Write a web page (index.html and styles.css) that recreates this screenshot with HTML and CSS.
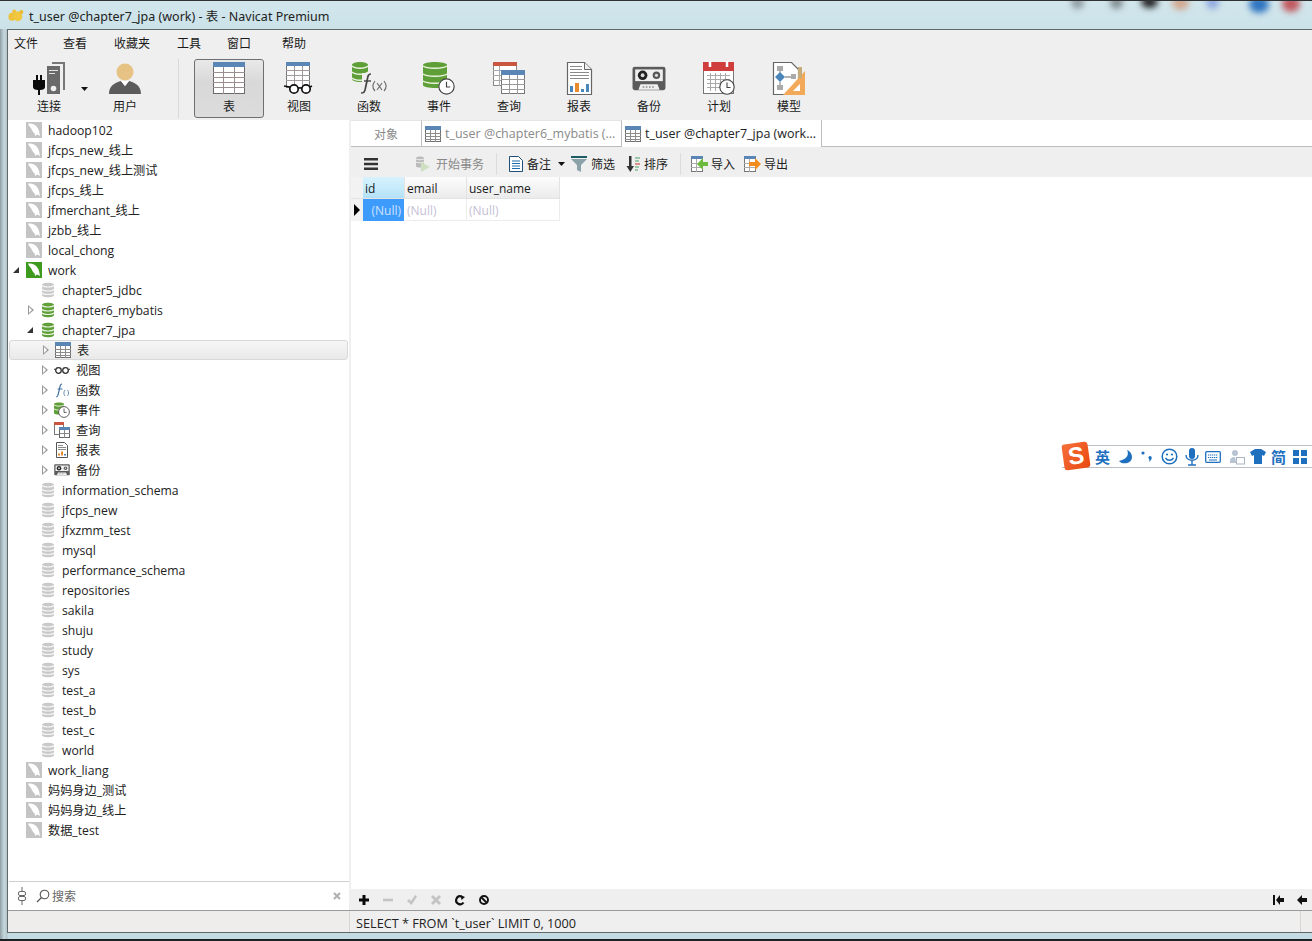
FILE: index.html
```html
<!DOCTYPE html>
<html lang="zh">
<head>
<meta charset="utf-8">
<title>t_user @chapter7_jpa (work) - 表 - Navicat Premium</title>
<link rel="stylesheet" href="styles.css">
</head>
<body>
<svg class="defs" width="0" height="0">
  <symbol id="conn" viewBox="0 0 16 16"><rect width="16" height="16" fill="#c4c4c4"/><path d="M2 1.500c4-.5 8 1 10 5 1 2 1.500 4 2 7.500-1-.5-2.500-1.500-3-1.500L9 14c0-2-.5-3-1.500-3.500C6 9 6 7 4.500 5.500 3.500 4.500 2.500 3 2 1.500z" fill="#fff"/></symbol>
  <symbol id="conn-on" viewBox="0 0 16 16"><rect width="16" height="16" fill="#3e9a1f"/><path d="M2 1.500c4-.5 8 1 10 5 1 2 1.500 4 2 7.500-1-.5-2.500-1.500-3-1.500L9 14c0-2-.5-3-1.500-3.500C6 9 6 7 4.500 5.500 3.500 4.500 2.500 3 2 1.500z" fill="#fff"/></symbol>
  <symbol id="db-off" viewBox="0 0 14 16"><path d="M1 3c0-3 12-3 12 0v10c0 3-12 3-12 0z" fill="#c9c9c9"/><path d="M1 3.500c2 2 10 2 12 0M1 7.500c2 2 10 2 12 0M1 11c2 2 10 2 12 0" fill="none" stroke="#f5f5f5" stroke-width="1.200"/></symbol>
  <symbol id="db-on" viewBox="0 0 14 16"><path d="M1 3c0-3 12-3 12 0v10c0 3-12 3-12 0z" fill="#5f9f37"/><path d="M1 3.500c2 2 10 2 12 0M1 7.500c2 2 10 2 12 0M1 11c2 2 10 2 12 0" fill="none" stroke="#e8f1df" stroke-width="1.200"/></symbol>
  <symbol id="tbl" viewBox="0 0 16 16"><rect x=".5" y=".5" width="15" height="15" fill="#fff" stroke="#6f6f6f"/><rect width="16" height="4" fill="#5a86b5"/><path d="M0 7.500h16M0 10.500h16M0 13.500h16M5.500 4v12M10.500 4v12" stroke="#8c8c8c"/></symbol>
  <symbol id="glasses" viewBox="0 0 16 16"><circle cx="4.500" cy="8.500" r="2.800" fill="#fff" stroke="#333" stroke-width="1.300"/><circle cx="11.500" cy="8.500" r="2.800" fill="#fff" stroke="#333" stroke-width="1.300"/><path d="M0 7l2 1M16 7l-2 1" stroke="#333"/></symbol>
  <symbol id="clock" viewBox="0 0 16 16"><circle cx="8" cy="8" r="7.200" fill="#fff" stroke="#444" stroke-width="1.100"/><path d="M8 3.500V8.500h3.500" fill="none" stroke="#444" stroke-width="1.100"/></symbol>
  <symbol id="query" viewBox="0 0 16 16"><rect x=".5" y=".5" width="9" height="12" fill="#fff" stroke="#777"/><rect width="10" height="3" fill="#c9563f"/><rect x="5.500" y="5.500" width="10" height="10" fill="#fff" stroke="#666"/><rect x="5" y="5" width="11" height="3" fill="#5a86b5"/><path d="M6 11.500h10M10.500 8v8" stroke="#888"/></symbol>
  <symbol id="report" viewBox="0 0 16 16"><path d="M2.500.5h8l3 3v12h-11z" fill="#fff" stroke="#555"/><path d="M4 3.500h5M4 5.500h8M4 7.500h8" stroke="#888"/><path d="M4 13.500v-2h2v2zM7 13.500v-4h2v4z" fill="#e88a2e"/><path d="M10 13.500v-1.500h2v1.500z" fill="#3f7fb8"/></symbol>
  <symbol id="tape" viewBox="0 0 32 24"><rect x=".5" y=".5" width="31" height="22" rx="2" fill="#5b5b5b"/><rect x="3" y="3" width="26" height="11" fill="#efefef"/><circle cx="10" cy="8.500" r="4.500" fill="#222"/><circle cx="10" cy="8.500" r="1.800" fill="#ddd"/><circle cx="23" cy="8.500" r="3.500" fill="#555"/><circle cx="23" cy="8.500" r="1.500" fill="#ddd"/><path d="M6 22l2-5h16l2 5z" fill="#efefef"/><path d="M10 19.500h12" stroke="#555" stroke-dasharray="1.500 1.500"/></symbol>
  <symbol id="note" viewBox="0 0 16 16"><path d="M1.500.5h9l4 4v11h-13z" fill="#fff" stroke="#1f4e79"/><path d="M4 5h8M4 7.500h8M4 10h8M4 12.500h8" stroke="#1b6fa8" stroke-width="1.100"/></symbol>
  <symbol id="down" viewBox="0 0 7 4"><path d="M0 0h7L3.500 4z" fill="#111"/></symbol>
</svg>

<div class="window">
  <header class="titlebar">
    <svg class="app-logo" viewBox="0 0 18 14"><ellipse cx="4.500" cy="8.500" rx="4" ry="4.500" fill="#eec13c"/><ellipse cx="11" cy="8" rx="5" ry="5.500" fill="#f1c73e"/><circle cx="7" cy="2.500" r="2.300" fill="#f0c23c"/><circle cx="15" cy="3" r="2.300" fill="#e9b935"/></svg>
    <span class="title-text">t_user @chapter7_jpa (work) - 表 - Navicat Premium</span>
    <i class="blob blob-a"></i><i class="blob blob-b"></i><i class="blob blob-c"></i><i class="blob blob-d"></i><i class="blob blob-e"></i><i class="blob blob-f"></i><i class="blob blob-g"></i>
  </header>

  <div class="client">
    <nav class="menubar">
      <span>文件</span><span>查看</span><span>收藏夹</span><span>工具</span><span>窗口</span><span>帮助</span>
    </nav>

    <div class="toolbar">
      <div class="tool tool-conn">
        <svg class="tool-icon tool-icon-conn" width="52" height="36" viewBox="0 0 52 36">
          <path d="M20 1h13v28h-2V3H20z" fill="#777"/>
          <rect x="15" y="5" width="13" height="28" fill="#6a6a6a"/><path d="M17 9.500h9M17 12.500h6" stroke="#e2e2e2" stroke-width="1.200"/><circle cx="21.500" cy="27.500" r="2.800" fill="#f0f0f0"/>
          <path d="M4 14h2v5h2v-5h2v5h3v7c0 2-2 3-5 3v5H6v-5c-3 0-5-1-5-3v-7h3z" fill="#0b0b0b"/>
        </svg>
        <svg class="tool-caret" width="7" height="4"><use href="#down"/></svg>
        <span>连接</span>
      </div>
      <div class="tool tool-user">
        <svg class="tool-icon" width="34" height="36" viewBox="0 0 34 36">
          <path d="M1 33c0-8 5-11 12-13l4 5 4-5c7 2 12 5 12 13z" fill="#5b5b5b"/><path d="M13 20l4 5 4-5z" fill="#fff"/>
          <circle cx="17" cy="11" r="8.500" fill="#e6c284"/>
        </svg>
        <span>用户</span>
      </div>
      <div class="tool-sep"></div>
      <div class="tool tool-btn is-active">
        <svg class="tool-icon" width="34" height="36" viewBox="0 0 34 36">
          <rect x="1.500" y="1.500" width="31" height="31" fill="#fff" stroke="#6a6a6a"/><rect x="1" y="1" width="32" height="5" fill="#5a86b5"/>
          <path d="M1 11.500h32M1 16.500h32M1 21.500h32M1 26.500h32M11.500 6v27M22.500 6v27" stroke="#9a8f8f"/>
        </svg>
        <span>表</span>
      </div>
      <div class="tool tool-btn">
        <svg class="tool-icon" width="34" height="36" viewBox="0 0 34 36">
          <rect x="4.500" y="1.500" width="23" height="25" fill="#fff" stroke="#777"/><rect x="4" y="1" width="24" height="4" fill="#5a86b5"/>
          <path d="M4 9.500h24M4 14.500h24M4 19.500h24M12.500 5v21M20.500 5v21" stroke="#a09a9a"/>
          <circle cx="12" cy="28" r="4.200" fill="#fff" stroke="#111" stroke-width="1.700"/><circle cx="24" cy="28" r="4.200" fill="#fff" stroke="#111" stroke-width="1.700"/>
          <path d="M2 25l6 1M30 25l-2 1M16 27h4" stroke="#111" stroke-width="1.500"/>
        </svg>
        <span>视图</span>
      </div>
      <div class="tool tool-btn">
        <svg class="tool-icon" width="36" height="36" viewBox="0 0 36 36">
          <path d="M1 4c0-4 16-4 16 0v14c0 4-16 4-16 0z" fill="#5f9f37"/><path d="M1 5c3 3 13 3 16 0M1 11c3 3 13 3 16 0M1 17c3 3 13 3 16 0" fill="none" stroke="#eef5e6" stroke-width="1.500"/>
          <rect x="11" y="12" width="25" height="24" fill="#efefef"/>
          <path d="M20 13c-3 0-3 2-4 7l-2 9c-1 3-2 3-4 3" fill="none" stroke="#444" stroke-width="1.700"/><path d="M13 20h7" stroke="#444" stroke-width="1.400"/>
          <path d="M24 20c-3 4-3 7 0 10M33 20c3 4 3 7 0 10M26 22l5 7M31 22l-5 7" fill="none" stroke="#666" stroke-width="1.100"/>
        </svg>
        <span>函数</span>
      </div>
      <div class="tool tool-btn">
        <svg class="tool-icon" width="34" height="36" viewBox="0 0 34 36">
          <path d="M1 4c0-4 24-4 24 0v20c0 4-24 4-24 0z" fill="#5f9f37"/><path d="M1 5c4 3 20 3 24 0M1 13c4 3 20 3 24 0M1 20c4 3 20 3 24 0" fill="none" stroke="#eef5e6" stroke-width="1.500"/>
          <svg x="16" y="17" width="17" height="17"><use href="#clock"/></svg>
        </svg>
        <span>事件</span>
      </div>
      <div class="tool tool-btn">
        <svg class="tool-icon" width="34" height="36" viewBox="0 0 34 36">
          <rect x="1.500" y="1.500" width="23" height="23" fill="#fff" stroke="#888"/><rect x="1" y="1" width="24" height="4" fill="#c9563f"/>
          <path d="M1 9.500h10M1 14.500h10M1 19.500h10M7.500 5v20" stroke="#aaa"/>
          <rect x="9.500" y="9.500" width="23" height="23" fill="#fff" stroke="#777"/><rect x="9" y="9" width="24" height="5" fill="#5a86b5"/>
          <path d="M9 18.500h24M9 23.500h24M9 28.500h24M17.500 14v19M25.500 14v19" stroke="#999"/>
        </svg>
        <span>查询</span>
      </div>
      <div class="tool tool-btn">
        <svg class="tool-icon" width="34" height="36" viewBox="0 0 34 36">
          <path d="M5.500 1.500h17l7 7v25h-24z" fill="#fff" stroke="#666" stroke-width="1.200"/><path d="M22.500 1.500v7h7" fill="#eee" stroke="#666"/>
          <path d="M8 5.500h12M8 8.500h12M8 11.500h19M8 14.500h19M8 17.500h19" stroke="#8a8a8a"/>
          <path d="M8 31v-6h3v6z" fill="#4b86bb"/><path d="M13 31V22h4v9z" fill="#e88a2e"/><path d="M19 31v-3h3v3z" fill="#4b86bb"/><path d="M24 31v-8h3v8z" fill="#4b86bb"/>
        </svg>
        <span>报表</span>
      </div>
      <div class="tool tool-btn">
        <svg class="tool-icon" width="34" height="36" viewBox="0 0 32 24"><use href="#tape"/></svg>
        <span>备份</span>
      </div>
      <div class="tool tool-btn">
        <svg class="tool-icon" width="34" height="36" viewBox="0 0 34 36">
          <rect x="1.500" y="3.500" width="30" height="29" fill="#fff" stroke="#777"/><rect x="1" y="1" width="31" height="9" fill="#cf3d3d"/>
          <path d="M8 0v6M25 0v6" stroke="#fff" stroke-width="2.500"/>
          <path d="M5 14.500h23M5 18.500h23M5 22.500h23M5 26.500h23M8.500 12v18M13.500 12v18M18.500 12v18M23.500 12v18" stroke="#aaa"/>
          <svg x="17" y="18" width="16" height="16"><use href="#clock"/></svg>
        </svg>
        <span>计划</span>
      </div>
      <div class="tool tool-btn">
        <svg class="tool-icon" width="34" height="36" viewBox="0 0 34 36">
          <path d="M1.500 1.500h18l7 7v25h-25z" fill="#fff" stroke="#666" stroke-width="1.200"/>
          <rect x="5" y="5" width="6" height="5" fill="#aaa"/><rect x="5" y="24" width="6" height="5" fill="#aaa"/><path d="M8 11l5 5-5 5-5-5z" fill="#4b86bb"/><path d="M13 16h6M8 10v2M8 21v3" stroke="#999" stroke-width="1.300"/><rect x="19" y="13" width="5" height="5" fill="#aaa"/>
          <path d="M33 10v24H11z" fill="#f3a95a"/><path d="M28 23v7h-7z" fill="#fff"/><rect x="26" y="6" width="4" height="11" fill="#c4ad7b"/>
        </svg>
        <span>模型</span>
      </div>
    </div>

    <div class="workspace">
      <aside class="sidebar">
        <div class="tree">
          <div class="row l0"><span class="arrow"></span><svg class="ico"><use href="#conn"/></svg><span>hadoop102</span></div>
          <div class="row l0"><span class="arrow"></span><svg class="ico"><use href="#conn"/></svg><span>jfcps_new_线上</span></div>
          <div class="row l0"><span class="arrow"></span><svg class="ico"><use href="#conn"/></svg><span>jfcps_new_线上测试</span></div>
          <div class="row l0"><span class="arrow"></span><svg class="ico"><use href="#conn"/></svg><span>jfcps_线上</span></div>
          <div class="row l0"><span class="arrow"></span><svg class="ico"><use href="#conn"/></svg><span>jfmerchant_线上</span></div>
          <div class="row l0"><span class="arrow"></span><svg class="ico"><use href="#conn"/></svg><span>jzbb_线上</span></div>
          <div class="row l0"><span class="arrow"></span><svg class="ico"><use href="#conn"/></svg><span>local_chong</span></div>
          <div class="row l0"><span class="arrow open"></span><svg class="ico"><use href="#conn-on"/></svg><span>work</span></div>
          <div class="row l1"><span class="arrow"></span><svg class="ico"><use href="#db-off"/></svg><span>chapter5_jdbc</span></div>
          <div class="row l1"><span class="arrow closed"></span><svg class="ico"><use href="#db-on"/></svg><span>chapter6_mybatis</span></div>
          <div class="row l1"><span class="arrow open"></span><svg class="ico"><use href="#db-on"/></svg><span>chapter7_jpa</span></div>
          <div class="row l2 is-selected"><span class="arrow closed"></span><svg class="ico"><use href="#tbl"/></svg><span>表</span></div>
          <div class="row l2"><span class="arrow closed"></span><svg class="ico"><use href="#glasses"/></svg><span>视图</span></div>
          <div class="row l2"><span class="arrow closed"></span><svg class="ico" viewBox="0 0 16 16"><path d="M8 2C6 2 6 4 5.500 7L4 13c-.3 1.500-1 2-2 2" fill="none" stroke="#3d6f9e" stroke-width="1.200"/><path d="M3.500 7h5" stroke="#3d6f9e"/><path d="M11 8c-1.500 2-1.500 4 0 6M13.500 8c1.500 2 1.500 4 0 6" fill="none" stroke="#6d8fb0"/></svg><span>函数</span></div>
          <div class="row l2"><span class="arrow closed"></span><svg class="ico" viewBox="0 0 16 16"><path d="M0 2c0-2 10-2 10 0v9c0 2-10 2-10 0z" fill="#5f9f37"/><path d="M0 3c2 1.500 8 1.500 10 0M0 7c2 1.500 8 1.500 10 0" fill="none" stroke="#e8f1df"/><svg x="4" y="4" width="12" height="12"><use href="#clock"/></svg></svg><span>事件</span></div>
          <div class="row l2"><span class="arrow closed"></span><svg class="ico"><use href="#query"/></svg><span>查询</span></div>
          <div class="row l2"><span class="arrow closed"></span><svg class="ico"><use href="#report"/></svg><span>报表</span></div>
          <div class="row l2"><span class="arrow closed"></span><svg class="ico" viewBox="0 0 32 24"><use href="#tape"/></svg><span>备份</span></div>
          <div class="row l1"><span class="arrow"></span><svg class="ico"><use href="#db-off"/></svg><span>information_schema</span></div>
          <div class="row l1"><span class="arrow"></span><svg class="ico"><use href="#db-off"/></svg><span>jfcps_new</span></div>
          <div class="row l1"><span class="arrow"></span><svg class="ico"><use href="#db-off"/></svg><span>jfxzmm_test</span></div>
          <div class="row l1"><span class="arrow"></span><svg class="ico"><use href="#db-off"/></svg><span>mysql</span></div>
          <div class="row l1"><span class="arrow"></span><svg class="ico"><use href="#db-off"/></svg><span>performance_schema</span></div>
          <div class="row l1"><span class="arrow"></span><svg class="ico"><use href="#db-off"/></svg><span>repositories</span></div>
          <div class="row l1"><span class="arrow"></span><svg class="ico"><use href="#db-off"/></svg><span>sakila</span></div>
          <div class="row l1"><span class="arrow"></span><svg class="ico"><use href="#db-off"/></svg><span>shuju</span></div>
          <div class="row l1"><span class="arrow"></span><svg class="ico"><use href="#db-off"/></svg><span>study</span></div>
          <div class="row l1"><span class="arrow"></span><svg class="ico"><use href="#db-off"/></svg><span>sys</span></div>
          <div class="row l1"><span class="arrow"></span><svg class="ico"><use href="#db-off"/></svg><span>test_a</span></div>
          <div class="row l1"><span class="arrow"></span><svg class="ico"><use href="#db-off"/></svg><span>test_b</span></div>
          <div class="row l1"><span class="arrow"></span><svg class="ico"><use href="#db-off"/></svg><span>test_c</span></div>
          <div class="row l1"><span class="arrow"></span><svg class="ico"><use href="#db-off"/></svg><span>world</span></div>
          <div class="row l0"><span class="arrow"></span><svg class="ico"><use href="#conn"/></svg><span>work_liang</span></div>
          <div class="row l0"><span class="arrow"></span><svg class="ico"><use href="#conn"/></svg><span>妈妈身边_测试</span></div>
          <div class="row l0"><span class="arrow"></span><svg class="ico"><use href="#conn"/></svg><span>妈妈身边_线上</span></div>
          <div class="row l0"><span class="arrow"></span><svg class="ico"><use href="#conn"/></svg><span>数据_test</span></div>
        </div>
        <div class="search">
          <svg class="search-mode" width="10" height="20" viewBox="0 0 10 20"><path d="M5 1v4M5 15v4" stroke="#666"/><rect x="1.500" y="5.500" width="7" height="4" rx="1.500" fill="#fff" stroke="#666"/><rect x="1.500" y="10.500" width="7" height="4" rx="1.500" fill="#fff" stroke="#666"/></svg>
          <svg class="search-glass" width="14" height="14" viewBox="0 0 14 14"><circle cx="8.500" cy="5.500" r="4.300" fill="none" stroke="#555" stroke-width="1.100"/><path d="M5.500 8.500L1 13" stroke="#555" stroke-width="1.200"/></svg>
          <span class="search-label">搜索</span>
          <svg class="search-clear" width="8" height="8" viewBox="0 0 8 8"><path d="M1 1l6 6M7 1L1 7" stroke="#b0b0b0" stroke-width="2"/></svg>
        </div>
      </aside>

      <main class="content">
        <div class="tabs">
          <div class="tab tab-obj">对象</div>
          <div class="tab tab-doc"><svg class="ico"><use href="#tbl"/></svg><span>t_user @chapter6_mybatis (...</span></div>
          <div class="tab tab-doc is-current"><svg class="ico"><use href="#tbl"/></svg><span>t_user @chapter7_jpa (work...</span></div>
          <div class="tab-rest"></div>
        </div>

        <div class="actions">
          <svg class="menu-ico" width="14" height="12" viewBox="0 0 14 12"><path d="M0 0h14v2.500H0zM0 4.700h14v2.500H0zM0 9.500h14V12H0z" fill="#333"/></svg>
          <span class="act act-tx"><svg width="16" height="16" viewBox="0 0 16 16"><path d="M1 2c0-2 8-2 8 0v8c0 2-8 2-8 0z" fill="#bbb"/><path d="M1 3c2 1 6 1 8 0M1 6c2 1 6 1 8 0" fill="none" stroke="#eee"/><path d="M6 6l9 5-9 5z" fill="#cfe0c2"/></svg>开始事务</span>
          <i class="act-sep act-sep-a"></i>
          <span class="act act-note"><svg width="16" height="16"><use href="#note"/></svg>备注</span>
          <svg class="act-caret" width="7" height="4"><use href="#down"/></svg>
          <span class="act act-filter"><svg width="16" height="16" viewBox="0 0 16 16"><path d="M0 0h16v2H0z" fill="#1e5c66"/><path d="M0 3h16l-6 6v7l-4-2V9z" fill="#8aa2a8"/></svg>筛选</span>
          <span class="act act-sort"><svg width="16" height="16" viewBox="0 0 16 16"><path d="M4 0h2.500v10H9l-3.700 6L1.500 10H4z" fill="#333"/><path d="M10 2h5M10 5h4" stroke="#4f9d63" stroke-width="1.200"/><path d="M10 8h5" stroke="#d04a4a" stroke-width="1.200"/><path d="M10 11h4M10 14h3" stroke="#4f9d63" stroke-width="1.200"/></svg>排序</span>
          <i class="act-sep act-sep-b"></i>
          <span class="act act-import"><svg width="17" height="16" viewBox="0 0 17 16"><rect x=".5" y=".5" width="11" height="15" fill="#fff" stroke="#777"/><rect width="12" height="3" fill="#5a86b5"/><path d="M0 7.500h11M0 11.500h11M5.500 3v13" stroke="#aaa"/><path d="M17 6h-5V2L6 8l6 6v-4h5z" fill="#6cbb3c"/></svg>导入</span>
          <span class="act act-export"><svg width="17" height="16" viewBox="0 0 17 16"><rect x=".5" y=".5" width="11" height="15" fill="#fff" stroke="#777"/><rect width="12" height="3" fill="#5a86b5"/><path d="M0 7.500h11M0 11.500h11M5.500 3v13" stroke="#aaa"/><path d="M5 6h6V2l6 6-6 6v-4H5z" fill="#f28c1e"/></svg>导出</span>
        </div>

        <div class="grid-area">
          <div class="grid">
            <div class="gh gh-corner"></div>
            <div class="gh gh-sel">id</div>
            <div class="gh">email</div>
            <div class="gh">user_name</div>
            <div class="gm"><svg width="6" height="12" viewBox="0 0 6 12"><path d="M0 0l6 6-6 6z" fill="#000"/></svg></div>
            <div class="gc gc-sel">(Null)</div>
            <div class="gc">(Null)</div>
            <div class="gc">(Null)</div>
          </div>
        </div>

        <div class="nav">
          <svg width="10" height="10" viewBox="0 0 10 10"><path d="M3.500 0h3v3.500H10v3H6.500V10h-3V6.500H0v-3h3.500z" fill="#0a0a0a"/></svg>
          <svg width="10" height="10" viewBox="0 0 10 10"><path d="M0 3.700h10v2.600H0z" fill="#c4c4c4"/></svg>
          <svg width="10" height="10" viewBox="0 0 10 10"><path d="M0 6l2-2 2 2 4-6 2 1.500L4.500 10z" fill="#c4c4c4"/></svg>
          <svg width="10" height="10" viewBox="0 0 10 10"><path d="M1 1l8 8M9 1l-8 8" stroke="#c4c4c4" stroke-width="3"/></svg>
          <svg width="10" height="10" viewBox="0 0 10 10"><path d="M8.500 7.500A4 4 0 1 1 6.500 1.500" fill="none" stroke="#111" stroke-width="2.200"/><path d="M5.500 0l4.500 2-3.500 3z" fill="#111"/></svg>
          <svg width="10" height="10" viewBox="0 0 10 10"><circle cx="5" cy="5" r="4" fill="none" stroke="#111" stroke-width="1.900"/><path d="M2.500 2.500l5 5" stroke="#111" stroke-width="1.900"/></svg>
          <span class="nav-fill"></span>
          <svg class="nav-first" width="11" height="10" viewBox="0 0 11 10"><path d="M0 0h2v10H0zM3 5l4-5v3h4v4H7v3z" fill="#111"/></svg>
          <svg class="nav-back" width="10" height="10" viewBox="0 0 10 10"><path d="M0 5l5-5v3h5v4H5v3z" fill="#111"/></svg>
        </div>
      </main>
    </div>

    <footer class="status">
      <div class="status-left"></div>
      <div class="status-sql">SELECT * FROM `t_user` LIMIT 0, 1000</div>
      <div class="status-end"></div>
    </footer>
  </div>
</div>

<div class="ime">
  <span class="ime-logo">S</span>
  <span class="ime-item">英</span>
  <svg width="16" height="16" viewBox="0 0 16 16"><path d="M9 1c2 4 1 9-8 11 3 4 13 3 13-4 0-3-2-6-5-7z" fill="#1e70bf"/></svg>
  <svg width="16" height="16" viewBox="0 0 16 16"><circle cx="3" cy="4" r="1.600" fill="#1e70bf"/><path d="M10 7c2 0 3 3-1 6 1-2 0-3-.500-4s.500-2 1.500-2z" fill="#1e70bf"/></svg>
  <svg width="17" height="17" viewBox="0 0 17 17"><circle cx="8.500" cy="8.500" r="7.300" fill="none" stroke="#1e70bf" stroke-width="1.500"/><circle cx="6" cy="6.500" r="1.100" fill="#1e70bf"/><circle cx="11" cy="6.500" r="1.100" fill="#1e70bf"/><path d="M4.500 10c2 3 6 3 8 0" fill="none" stroke="#1e70bf" stroke-width="1.400"/></svg>
  <svg width="14" height="18" viewBox="0 0 14 18"><rect x="4" y="0" width="6" height="11" rx="3" fill="#1e70bf"/><path d="M1 7c0 7 12 7 12 0M7 12v5M3 17h8" fill="none" stroke="#1e70bf" stroke-width="1.400"/></svg>
  <svg width="16" height="12" viewBox="0 0 16 12"><rect x=".7" y=".7" width="14.600" height="10.600" rx="1" fill="none" stroke="#1e70bf" stroke-width="1.300"/><path d="M3 4h10M3 6.500h10" stroke="#1e70bf" stroke-dasharray="1.300 .7"/><path d="M4 9h8" stroke="#1e70bf"/></svg>
  <svg width="16" height="16" viewBox="0 0 16 16"><circle cx="6" cy="4" r="3" fill="#b8c4d2"/><path d="M1 12c0-3 2-4 5-4l1 5v1H1z" fill="#b8c4d2"/><rect x="7.500" y="8.500" width="8" height="6.500" fill="#fff" stroke="#a8b4c2"/></svg>
  <svg width="16" height="15" viewBox="0 0 16 15"><path d="M5 0h6l5 3-2 4-2-1v9H4V6L2 7 0 3z" fill="#1e70bf"/></svg>
  <span class="ime-item">简</span>
  <svg width="14" height="14" viewBox="0 0 14 14"><path d="M0 0h6v6H0zM8 0h6v6H8zM0 8h6v6H0zM8 8h6v6H8z" fill="#1e70bf"/></svg>
</div>
</body>
</html>
```

FILE: styles.css
```css
* { box-sizing: border-box; }
html, body { margin: 0; padding: 0; height: 100%; overflow: hidden; }
body {
  width: 1312px;
  height: 941px;
  font-family: "Open Sans", "Noto Sans CJK SC", sans-serif;
  font-size: 12px;
  color: #1a1a1a;
  background: #c9e1e8;
  position: relative;
}
.defs { position: absolute; }
svg { display: block; flex: none; overflow: visible; }

.window {
  height: 941px;
  display: flex;
  flex-direction: column;
  padding: 0 0 6px 7px;
  background: linear-gradient(90deg, #8f9fa4 0, #c5d8de 4px, #b4c6cb 7px, #c4dbe3 8px);
  border-top: 1px solid #2d3134;
  border-bottom: 2px solid #1c2023;
}
.titlebar {
  height: 28px;
  margin-left: -7px;
  padding-left: 8px;
  display: flex;
  align-items: center;
  gap: 5px;
  flex: none;
  position: relative;
  overflow: hidden;
  background: linear-gradient(180deg, #d2e6ec 0, #cbe2e9 100%);
}
.app-logo { width: 16px; height: 13px; }
.title-text {
  font-family: "Noto Sans", "Noto Sans CJK SC", sans-serif;
  font-size: 12.5px;
  color: #222;
}
.blob { position: absolute; top: -5px; border-radius: 50%; filter: blur(3px); width: 13px; height: 13px; }
.blob-a { left: 1071px; background: #8d9ba0; }
.blob-b { left: 1110px; background: #7f8c90; }
.blob-c { left: 1141px; background: #222; width: 17px; height: 12px; }
.blob-d { left: 1172px; background: #d1a78f; width: 17px; height: 14px; }
.blob-e { left: 1206px; background: #8ea6e0; }
.blob-f { left: 1249px; background: #2f75c0; width: 20px; height: 17px; }
.blob-g { left: 1282px; background: #c0585e; width: 18px; height: 16px; }

.client {
  flex: 1;
  min-height: 0;
  display: flex;
  flex-direction: column;
  background: #efefef;
  border-top: 1px solid #62676a;
  border-left: 1px solid #62676a;
  border-bottom: 1px solid #62676a;
}
.menubar {
  height: 28px;
  flex: none;
  padding: 0 0 2px 6px;
  display: grid;
  grid-template-columns: 49px 51px 63px 50px 55px auto;
  align-items: center;
  font-size: 12px;
}

.toolbar {
  height: 62px;
  flex: none;
  display: flex;
  align-items: flex-start;
  padding-left: 15px;
}
.tool {
  display: flex;
  flex-direction: column;
  align-items: center;
  position: relative;
  padding-top: 3px;
  font-size: 12px;
}
.tool span { line-height: 16px; margin-top: 2px; }
.tool-icon { height: 36px; }
.tool-icon-conn { margin-left: 18px; }
.tool-conn { width: 52px; }
.tool-user { width: 34px; margin-left: 33px; }
.tool-caret { position: absolute; left: 58px; top: 29px; }
.tool-sep { width: 1px; height: 59px; margin: 1px 15px 2px 36px; background: #d9d9d9; }
.tool-btn { width: 70px; height: 59px; margin-top: 1px; border: 1px solid transparent; border-radius: 3px; padding-top: 1px; }
.is-active {
  border-color: #6d6f71;
  background: linear-gradient(180deg, #e9e9e9 0, #d8d8d8 40%, #dcdcdc 100%);
}

.workspace { flex: 1; min-height: 0; display: flex; }
.sidebar {
  width: 341px;
  flex: none;
  display: flex;
  flex-direction: column;
  background: #fff;
}
.tree { flex: 1; min-height: 0; font-size: 12.2px; }
.row {
  height: 20px;
  display: flex;
  align-items: center;
  white-space: nowrap;
  color: #222;
}
.row .ico { margin-right: 6px; }
.ico { width: 16px; height: 16px; }
.l0 { padding-left: 4px; }
.l1 { padding-left: 18px; }
.l2 { padding-left: 32px; }
.arrow { width: 14px; flex: none; height: 10px; position: relative; }
.arrow.closed::before {
  content: "";
  position: absolute;
  left: 2px;
  top: 0;
  border-left: 6px solid #9a9a9a;
  border-top: 5px solid transparent;
  border-bottom: 5px solid transparent;
}
.arrow.closed::after {
  content: "";
  position: absolute;
  left: 3px;
  top: 2px;
  border-left: 3px solid #fff;
  border-top: 3px solid transparent;
  border-bottom: 3px solid transparent;
}
.arrow.open::before {
  content: "";
  position: absolute;
  left: 1px;
  top: 2px;
  border-right: 6px solid #333;
  border-top: 6px solid transparent;
}
.is-selected {
  margin: 0 1px;
  padding-left: 31px;
  border: 1px solid #d8d8d8;
  border-radius: 3px;
  background: linear-gradient(180deg, #f6f6f6, #e9e9e9);
}
.search {
  height: 29px;
  flex: none;
  margin-left: 1px;
  border-top: 1px solid #cfcfcf;
  display: flex;
  align-items: center;
  color: #666;
  padding: 0 8px 0 8px;
}
.search-glass { margin-left: 9px; }
.search-label { margin-left: 2px; }
.search-clear { margin-left: auto; }

.content {
  flex: 1;
  min-width: 0;
  display: flex;
  flex-direction: column;
  background: #fff;
  border-left: 2px solid #efefef;
}
.tabs { height: 27px; flex: none; display: flex; background: #fff; }
.tab {
  display: flex;
  align-items: center;
  gap: 4px;
  padding-left: 3px;
  border-right: 1px solid #bdbdbd;
  border-bottom: 1px solid #bdbdbd;
  color: #8a8a8a;
  white-space: nowrap;
  overflow: hidden;
  font-size: 12.5px;
}
.tab-obj { width: 71px; justify-content: center; padding: 0; border-top: 1px solid #e5e5e5; font-size: 12px; }
.tab-doc { width: 200px; border-top: 1px solid #e5e5e5; }
.tab-rest { flex: 1; border-bottom: 1px solid #bdbdbd; }
.is-current { color: #222; border-bottom: 0; border-top: 0; }

.actions {
  height: 30px;
  flex: none;
  display: flex;
  align-items: center;
  background: #efefef;
  padding: 3px 0 0 13px;
  white-space: nowrap;
}
.menu-ico { margin-right: 37px; }
.act { display: flex; align-items: center; gap: 3px; color: #222; }
.act-tx { color: #888; gap: 5px; }
.act-sep { width: 1px; height: 22px; background: #dcdcdc; }
.act-sep-a { margin: 0 11px 0 12px; }
.act-sep-b { margin: 0 10px 0 12px; }
.act-caret { margin: 0 6px 0 7px; }
.act-filter { gap: 4px; }
.act-sort { margin-left: 10px; }
.act-export { margin-left: 9px; }

.grid-area { flex: 1; min-height: 0; background: #fff; }
.grid {
  display: grid;
  grid-template-columns: 12px 42px 62px 93px;
  grid-template-rows: 22px 22px;
  width: 209px;
}
.gh {
  padding: 1px 0 0 2px;
  line-height: 21px;
  background: linear-gradient(180deg, #fcfcfc 0, #f4f4f4 50%, #ebebeb 100%);
  border-right: 1px solid #e3e3e3;
  border-bottom: 1px solid #e3e3e3;
}
.gh-corner { background: #f2f2f2; border-right: 0; }
.gh-sel { background: linear-gradient(180deg, #d6f1fd 0, #c8ecfb 50%, #b3e0f7 100%); }
.gm { display: flex; align-items: center; padding-left: 3px; background: #f2f2f2; }
.gc {
  line-height: 21px;
  padding: 1px 0 0 2px;
  color: #c6c0d6;
  border-right: 1px solid #ececec;
  border-bottom: 1px solid #ececec;
}
.gc-sel {
  background: #3d9bfb;
  color: #cfe0ff;
  text-align: right;
  padding-right: 3px;
  border-right: 1px solid #fff;
  border-bottom: 0;
}

.nav {
  height: 21px;
  flex: none;
  display: flex;
  align-items: center;
  gap: 14px;
  background: #efefef;
  padding: 0 5px 0 8px;
}
.nav-fill { flex: 1; }
.nav-first { margin-right: -1px; }

.status {
  height: 22px;
  flex: none;
  display: flex;
  align-items: center;
  border-top: 1px solid #9a9a9a;
  background: #efefef;
}
.status-left { width: 342px; height: 100%; background: #efecec; border-right: 1px solid #d6d6d6; }
.status-sql { flex: 1; padding: 2px 0 0 6px; color: #222; font-size: 12.7px; }
.status-end { width: 12px; height: 100%; background: #efecec; border-left: 1px solid #d6d6d6; }

.ime {
  position: absolute;
  left: 1062px;
  top: 445px;
  width: 250px;
  height: 23px;
  display: grid;
  grid-template-columns: 23px 22px 21px 24px 20px 24px 21px 21px 22px auto;
  align-items: center;
  padding-left: 33px;
  background: #fff;
  border-top: 1px solid #b9bfc4;
  border-bottom: 1px solid #b9bfc4;
}
.ime-logo {
  position: absolute;
  left: 1px;
  top: -3px;
  width: 26px;
  height: 26px;
  background: linear-gradient(135deg, #f6703a, #e9480f);
  border-radius: 3px;
  transform: rotate(-8deg);
  color: #fff;
  font: bold 24px/26px "Liberation Sans", sans-serif;
  text-align: center;
}
.ime-item {
  font-size: 15px;
  font-weight: 700;
  color: #1e70bf;
  line-height: 20px;
}
```
